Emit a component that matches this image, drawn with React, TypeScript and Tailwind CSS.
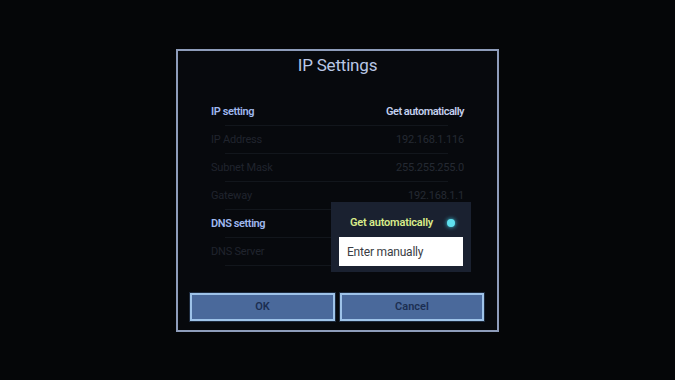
const rows = [
  { label: "IP setting", value: "Get automatically", active: true },
  { label: "IP Address", value: "192.168.1.116", active: false },
  { label: "Subnet Mask", value: "255.255.255.0", active: false },
  { label: "Gateway", value: "192.168.1.1", active: false },
  { label: "DNS setting", value: "", active: true },
  { label: "DNS Server", value: "", active: false },
];

export default function App() {
  return (
    <div
      className="flex h-[380px] w-[675px] justify-center overflow-hidden bg-[#050608] pt-[49px]"
      style={{ fontFamily: "Roboto, 'Noto Sans', sans-serif" }}
    >
      <div className="relative flex h-[283px] w-[323px] flex-col border-2 border-[#8e9cba] bg-[#07090d]">
        <h1 className="mt-[2px] text-center text-[17px] leading-[24px] tracking-[-0.2px] text-[#b9c7e6]">
          IP Settings
        </h1>

        <div className="mt-[21px] flex flex-col px-[33px]">
          {rows.map((r) => (
            <div key={r.label} className="relative flex h-[28px] items-center justify-between">
              <span
                className={
                  r.active
                    ? "text-[11px] font-semibold tracking-[-0.4px] text-[#9fb8ef]"
                    : "text-[11px] tracking-[-0.2px] text-[#20242d]"
                }
              >
                {r.label}
              </span>
              <span
                className={
                  r.active
                    ? "text-[11px] font-semibold tracking-[-0.5px] text-[#c3cfee]"
                    : "text-[11px] tracking-[-0.2px] text-[#252a33]"
                }
              >
                {r.value}
              </span>
              <div className="absolute bottom-0 left-[14px] right-[16px] h-px bg-[#12161c]" />
            </div>
          ))}
        </div>

        <div className="mt-auto mb-[9px] flex gap-[5px] px-[12px]">
          <button className="flex h-[28px] w-[145px] items-center justify-center border-2 border-[#9ec3e9] bg-[#4a699b] text-[11px] font-semibold text-[#1c2f52] outline outline-1 outline-[#1d2a3d]">
            OK
          </button>
          <button className="flex h-[28px] w-[144px] items-center justify-center border-2 border-[#9ec3e9] bg-[#4a699b] text-[11px] font-semibold text-[#1c2f52] outline outline-1 outline-[#1d2a3d]">
            Cancel
          </button>
        </div>

        <div className="absolute left-[153px] top-[151px] flex h-[70px] w-[140px] flex-col bg-[#1a2130] px-[8px] pb-[6px]">
          <div className="flex flex-1 items-center justify-between pl-[11px] pr-[8px] pt-[7px]">
            <span className="text-[11px] font-semibold tracking-[-0.2px] text-[#d9ec8a]">
              Get automatically
            </span>
            <span className="h-[8px] w-[8px] rounded-full bg-[#5fe0ee] shadow-[0_0_4px_#40d0e8]" />
          </div>
          <div className="flex h-[29px] items-center bg-white pl-[8px] text-[12px] tracking-[-0.2px] text-[#3a3d44]">
            Enter manually
          </div>
        </div>
      </div>
    </div>
  );
}
